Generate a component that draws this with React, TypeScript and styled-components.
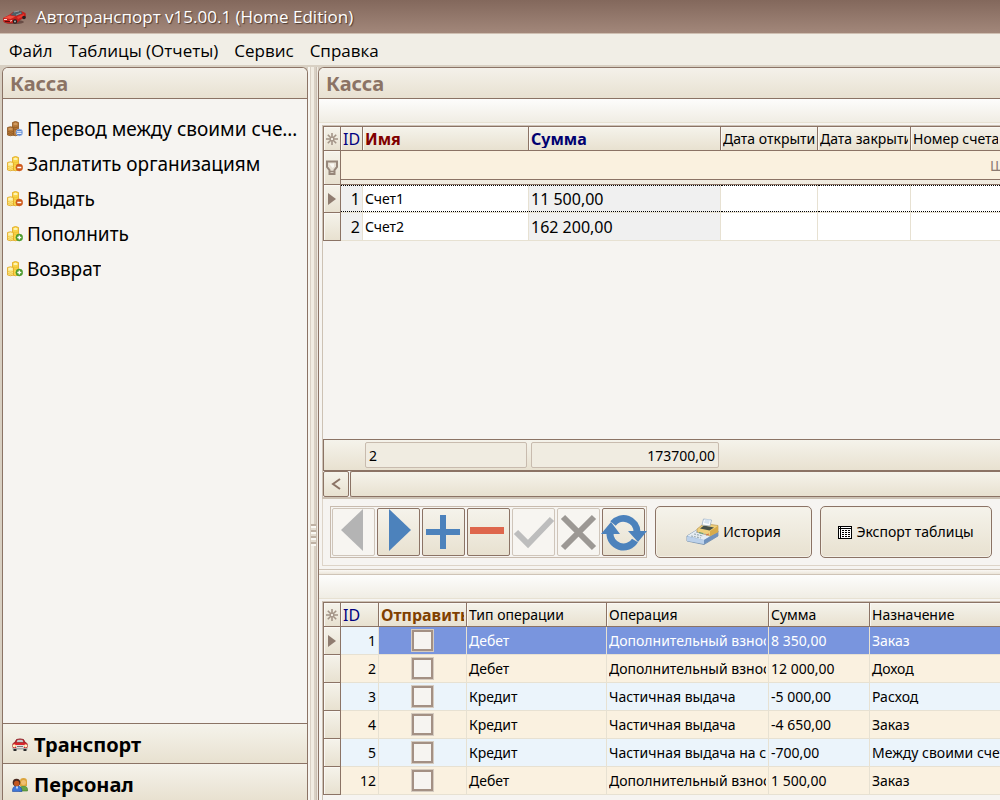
import React from 'react';
import styled, { createGlobalStyle, css } from 'styled-components';

const brown = '#8b7365';
const tan = '#cdc2b4';
const line = '#e7e1d2';
const face = 'linear-gradient(#f5f3eb, #e8e1d0)';

const GlobalStyle = createGlobalStyle`
  * { box-sizing: border-box; }
  html, body { margin: 0; }
  body { overflow: hidden; background: #f1eee6; color: #000; font: 14px/18px "Noto Sans", "DejaVu Sans", sans-serif; }
  button { font: inherit; color: inherit; cursor: pointer; }
`;

const Window = styled.div`
  min-height: 100vh;
  display: flex;
  flex-direction: column;
`;

const TitleBar = styled.header`
  height: 34px;
  display: flex;
  align-items: center;
  gap: 9px;
  padding: 0 2px;
  background: linear-gradient(#83685c, #a2877a);
  border-bottom: 1px solid #cfbfb2;
  color: #fff;
  font: 17px/22px "Open Sans", "Noto Sans", sans-serif;
  text-shadow: 1px 1px 1px #4b3830;
`;

const TitleText = styled.h1`
  margin: 0;
  font: inherit;
`;

const MenuBar = styled.nav`
  height: 33px;
  display: flex;
  align-items: center;
  gap: 16px;
  padding: 2px 9px 0;
  border-bottom: 2px solid #d8d0c3;
`;

const MenuItem = styled.button`
  border: 0;
  padding: 0;
  background: none;
  white-space: nowrap;
  font: 17px/22px "Open Sans", "Noto Sans", sans-serif;
`;

const Body = styled.div`
  flex: 1;
  display: flex;
  background: #d8cfc2;
  padding-left: 2px;
`;

const Sidebar = styled.aside`
  width: 306px;
  flex: none;
  display: flex;
  flex-direction: column;
  border: solid ${brown};
  border-width: 1px 1px 0;
  border-radius: 6px 6px 0 0;
  background: #f6f4f1;
  overflow: hidden;
`;

const PanelTitle = styled.h2`
  margin: 0;
  height: 31px;
  padding: 0 7px;
  background: linear-gradient(#f4f1ea, #e8e1d1);
  border-bottom: 1px solid ${brown};
  color: #8b7365;
  font-size: 20px;
  line-height: 32px;
  font-weight: 700;
`;

const ActionList = styled.ul`
  flex: 1;
  margin: 0;
  padding: 12px 4px;
  list-style: none;
`;

const Action = styled.button`
  width: 100%;
  height: 35px;
  display: flex;
  align-items: center;
  gap: 4px;
  padding: 0;
  border: 0;
  background: none;
  font-size: 19px;
  line-height: 26px;
  text-align: left;
  svg { flex: none; }
  span {
    min-width: 0;
    overflow: hidden;
    text-overflow: ellipsis;
    white-space: nowrap;
  }
`;

const GroupButton = styled.button`
  display: flex;
  align-items: center;
  gap: 6px;
  padding: 8px 9px 6px;
  border: 0;
  border-top: 1px solid ${brown};
  background: ${face};
  font-size: 20px;
  line-height: 25px;
  font-weight: 700;
  &:last-child { padding-bottom: 3px; }
`;

const SideSplitter = styled.div`
  width: 10px;
  flex: none;
  display: flex;
  align-items: center;
  justify-content: center;
  padding-top: 202px;
  background: linear-gradient(90deg, #f7f5f0 2px, #d9d0c4 2px 3px, #f1ece2 3px 6px, #d9d0c4 6px 8px, #cbc0b3 8px 9px, #efe9e0 9px);
`;

const Grip = styled.div`
  width: 5px;
  height: 22px;
  background: repeating-linear-gradient(#bfb1a3 0 2px, #faf8f3 2px 4px, #e4ddd1 4px 6px);
`;

const Main = styled.main`
  flex: 1;
  min-width: 0;
  display: flex;
  flex-direction: column;
  border: solid ${brown};
  border-width: 1px 0 0 1px;
  border-radius: 6px 0 0 0;
  background: #f6f4f1;
  overflow: hidden;
`;

const Strip = styled.div`
  height: 24px;
  flex: none;
  background: linear-gradient(#fdfdfc, #f0ede4);
  border-bottom: 1px solid ${line};
`;

const GridFrame = styled.section<{ $grow?: boolean }>`
  display: flex;
  flex-direction: column;
  margin: 2px 0 0 3px;
  border: solid ${tan};
  border-width: 1px 0 0 1px;
  ${p => (p.$grow ? css`flex: 1;` : css`padding-bottom: 5px;`)}
`;

const Table = styled.table`
  width: 100%;
  table-layout: fixed;
  border-collapse: separate;
  border-spacing: 0;
  border: solid ${brown};
  border-width: 1px 0 0 1px;
  th, td { padding: 0; text-align: left; overflow: hidden; white-space: nowrap; }
  th:last-child, td:last-child { border-right: 0; }
`;

const Head = styled.th<{ $color?: string; $big?: boolean; $bold?: boolean }>`
  height: 24px;
  border: solid ${brown};
  border-width: 0 1px 1px 0;
  background: ${face};
  box-shadow: inset 1px 1px #faf8f3;
  color: ${p => p.$color ?? '#000'};
  font-size: ${p => (p.$big ? 16 : 14)}px;
  font-weight: ${p => (p.$bold ? 700 : 400)};
`;

const Clip = styled.div`
  margin: 0 2px;
  overflow: hidden;
`;

const Marker = styled.td<{ $tall?: boolean }>`
  height: ${p => (p.$tall ? 34 : 28)}px;
  border: solid ${brown};
  border-width: 0 1px 1px 0;
  background: ${face};
  box-shadow: inset 1px 1px #faf8f3;
  svg { display: block; margin: 0 auto; }
`;

const FilterCell = styled.td`
  background: #faf1df;
  vertical-align: top;
`;

const FilterHint = styled.div`
  height: 29px;
  display: flex;
  justify-content: flex-end;
  border-bottom: 1px solid ${brown};
  color: #8b7b72;
  line-height: 30px;
  span { width: 10px; overflow: hidden; }
`;

const FilterBand = styled.div`
  height: 5px;
  background: #f0ebe0;
  border-bottom: 1px solid ${brown};
`;

const Cell = styled.td<{ $tone?: string; $big?: boolean }>`
  height: 28px;
  border: solid ${line};
  border-width: 0 1px 1px 0;
  background: ${p => p.$tone ?? '#fff'};
  font-size: ${p => (p.$big ? 16 : 14)}px;
`;

const Value = styled.div<{ $focus?: boolean; $right?: boolean }>`
  height: 27px;
  padding: 0 2px;
  line-height: ${p => (p.$focus ? 26 : 28)}px;
  text-align: ${p => (p.$right ? 'right' : 'left')};
  ${p => p.$focus && css`border: dotted #000; border-width: 1px 0;`}
`;

const Row = styled.tr<{ $selected?: boolean; $even?: boolean }>`
  ${Cell} { background: ${p => (p.$even ? '#faf1e0' : '#ebf4fb')}; }
  ${p => p.$selected && css`
    ${Cell}:nth-child(n + 3) { background: #7995de; color: #fff; }
  `}
`;

const Check = styled.input`
  appearance: none;
  display: block;
  width: 23px;
  height: 23px;
  margin: 0 auto;
  border: 3px solid #a39084;
  outline: 1px solid #d5cbc0;
  outline-offset: -1px;
  background: #f6f4f1;
`;

const Empty = styled.div`
  flex: 1;
`;

const Footer = styled.div`
  height: 32px;
  display: flex;
  gap: 4px;
  padding: 2px 0 2px 41px;
  border: solid ${brown};
  border-width: 1px 0 1px 1px;
  background: ${face};
`;

const Total = styled.output<{ $wide?: boolean }>`
  width: ${p => (p.$wide ? 188 : 162)}px;
  height: 26px;
  padding: 0 3px;
  border: 1px solid #c8bbae;
  border-radius: 2px;
  background: #f0ece1;
  line-height: 25px;
  text-align: ${p => (p.$wide ? 'right' : 'left')};
`;

const ScrollBar = styled.div`
  height: 28px;
  display: flex;
  gap: 1px;
  border-bottom: 2px solid ${tan};
`;

const ScrollArrow = styled.button`
  width: 26px;
  display: grid;
  place-items: center;
  padding: 0;
  border: 1px solid ${brown};
  border-radius: 2px;
  background: ${face};
`;

const ScrollThumb = styled.div`
  flex: 1;
  border: solid ${brown};
  border-width: 1px 0 1px 1px;
  border-radius: 2px 0 0 2px;
  background: ${face};
`;

const ToolPanel = styled.section`
  height: 67px;
  flex: none;
  display: flex;
  align-items: flex-start;
  gap: 8px;
  margin: 0 0 3px 3px;
  padding: 7px;
  border: solid #ddd4c8;
  border-width: 0 0 1px 1px;
`;

const Navigator = styled.div`
  display: flex;
  gap: 2px;
  height: 52px;
  padding: 1px;
  border: 1px solid #c8bbae;
`;

const NavButton = styled.button`
  width: 43px;
  height: 48px;
  padding: 0;
  border: 1px solid ${brown};
  border-radius: 2px;
  background: ${face};
  &:disabled { border-color: #cfc5ba; background: #f7f5f1; cursor: default; }
  svg { display: block; width: 100%; height: 100%; overflow: visible; }
`;

const CommandButton = styled.button<{ $wide?: boolean }>`
  width: ${p => (p.$wide ? 172 : 157)}px;
  height: 52px;
  flex: none;
  display: flex;
  align-items: center;
  justify-content: center;
  gap: 4px;
  padding: 0;
  border: 1px solid ${brown};
  border-radius: 5px;
  background: ${face};
  box-shadow: inset 0 0 0 1px #f4f0e6;
`;

const Divider = styled.div`
  height: 6px;
  flex: none;
  border: solid #cfc4b7;
  border-width: 1px 0;
  background: linear-gradient(#faf8f4, #ece6da);
`;

const CarIcon = () => (
  <svg width="25" height="16" viewBox="0 0 25 16">
    <ellipse cx="12" cy="13" rx="10" ry="2" fill="#4a2c28" opacity=".6" />
    <path d="M1 9 7 6l4-3 8-1 4.500 2 .5 4-5 2.500-4 3.500-9 .5-4.500-1.500z" fill="#c4201c" />
    <path d="m8.500 6 3.500-3.500 7-.5 1.500 2.500L14 7z" fill="#4f5f66" />
    <path d="m12 3 5-1M14 6l5-2" stroke="#a9b8bd" strokeWidth=".7" />
    <path d="m1.500 9 6-2.500 6 1-5 2.500z" fill="#f0503f" />
    <path d="m15 8 7-3v2l-6 3z" fill="#e83a30" />
    <circle cx="13" cy="12.500" r="2.200" fill="#25201f" /><circle cx="13" cy="12.500" r=".9" fill="#bbb" />
    <circle cx="22" cy="8.500" r="1.800" fill="#25201f" />
    <path d="M2 10.500h3M7 12.500l3-1" stroke="#ffd9d0" />
    <path d="M3 12.500h5" stroke="#5e0c0c" />
  </svg>
);

const CoinsIcon = ({ kind }: { kind: 'move' | 'minus' | 'plus' }) => {
  const move = kind === 'move';
  const edge = move ? '#8a5420' : '#dfa41c';
  const light = move ? '#d09a60' : '#fdf3b8';
  const gold = move ? '#b87a3a' : '#f9d548';
  const badge = move ? '#5b86d0' : kind === 'minus' ? '#cf5a1c' : '#4b9a2e';
  return (
    <svg width="16" height="16" viewBox="0 0 16 16">
      <path d="M5.500 1.500Q8.500-.5 11.500 1.500v12.500q-3 1.500-6 0z" fill={gold} stroke={edge} strokeWidth=".8" />
      <path d="M6.500 2.500q2-1.500 4 0v1q-2 1-4 0z" fill={light} />
      <path d="M.5 6.500Q3.500 5 6.500 6.500V14q-3 1.500-6 0z" fill={move ? gold : '#fbe88a'} stroke={edge} strokeWidth=".8" />
      <path d="M1.500 7.500q2-1.500 4 0v1q-2 1-4 0z" fill={light} />
      <path d="M1 10.500q2.500 1.500 5 0M1 12.500q2.500 1.500 5 0M6.500 6q2 1 4.500 0M7 8q2 1 4 0" stroke={move ? edge : '#eebf35'} fill="none" strokeWidth=".8" />
      <circle cx="12.300" cy="11.500" r="3.400" fill={badge} stroke={move ? '#b9cdf0' : badge} strokeWidth=".6" />
      {kind === 'move' && <path d="M10 10.800h4.500M10 12.400h4.500" stroke="#fff" />}
      {kind === 'minus' && <path d="M10.300 11.500h4" stroke="#fff" strokeWidth="1.500" />}
      {kind === 'plus' && <path d="M10.300 11.500h4M12.300 9.500v4" stroke="#fff" strokeWidth="1.400" />}
    </svg>
  );
};

const TransportIcon = () => (
  <svg width="16" height="16" viewBox="0 0 16 16">
    <path d="m2.500 6 2-3.500q3.500-1.200 7 0l2 3.500z" fill="#c8202a" stroke="#7e1820" strokeWidth=".8" />
    <path d="m4.500 5.500 1-2.500q2.500-.6 5 0l1 2.500z" fill="#c3ccd0" />
    <rect x=".5" y="5.500" width="15" height="6" rx="2.500" fill="#d9262c" stroke="#8a3030" strokeWidth=".5" />
    <path d="M3.500 8h9l-1 3.500h-7z" fill="#e4dfdc" />
    <path d="M5 9.500h6" stroke="#777" />
    <circle cx="2.300" cy="8.800" r="1.600" fill="#fff2c0" /><circle cx="13.700" cy="8.800" r="1.600" fill="#fff2c0" />
    <path d="M.5 11h15v1.500H.5z" fill="#a9a9a9" /><path d="M1.500 12h3v2h-3zM11.500 12h3v2h-3z" fill="#2a2a2a" />
  </svg>
);

const PeopleIcon = () => (
  <svg width="16" height="16" viewBox="0 0 16 16">
    <path d="M7 14q0-5 4.500-5t4 5z" fill="#6aa544" stroke="#3d7a28" strokeWidth=".6" />
    <path d="M8 9V4q0-3 3.500-3T15 4v5z" fill="#dca43c" /><circle cx="11.500" cy="5.500" r="2.500" fill="#f0bf70" />
    <path d="M.5 14.500q-.5-5.500 4.500-5.500t5 5.500z" fill="#3f76d8" stroke="#1e4aa0" strokeWidth=".6" />
    <circle cx="4.500" cy="5.500" r="3.800" fill="#49291f" /><circle cx="4.700" cy="6.500" r="2.700" fill="#c4571f" />
    <path d="m4 9.500 1 3 1-3z" fill="#fff" />
  </svg>
);

const StarIcon = styled(({ className }: { className?: string }) => (
  <svg className={className} width="12" height="12" viewBox="0 0 12 12">
    <path d="M6 0v12M0 6h12M1.800 1.800l8.400 8.400M10.200 1.800l-8.400 8.400" stroke="#a39487" strokeWidth="1.600" />
    <circle cx="6" cy="6" r="1.800" fill="#f1ede3" stroke="#a39487" strokeWidth="1.200" />
  </svg>
))`
  display: block;
  margin: 0 auto;
`;

const FilterIcon = () => (
  <svg width="12" height="16" viewBox="0 0 12 16">
    <path d="M1 1.500h10v5.500L8.500 10v4h-5v-4L1 7z" fill="#e7e0d4" stroke="#97877b" strokeWidth="2" />
    <path d="M3 3.500h5v3L6.500 8z" fill="#faf8f3" /><path d="M3 11.500h6M3.500 14h5" stroke="#97877b" strokeWidth="1.500" />
  </svg>
);

const PointerIcon = () => (
  <svg width="8" height="12" viewBox="0 0 8 12"><path d="M0 0v12l8-6z" fill="#8f7c70" /></svg>
);

const RegisterIcon = () => (
  <svg width="33" height="28" viewBox="0 0 33 28">
    <path d="m1 18 13-8 18 3v5L18 26.500 1 23z" fill="#8fb0d6" stroke="#64809f" strokeWidth=".7" />
    <path d="m1 18 13-8 17 4-13 8z" fill="#e6edf3" />
    <path d="m1 18.500 17 3.500v4L1 23z" fill="#bcd1ea" /><path d="m18 22 14-8v4L18 26z" fill="#6f91bc" />
    <path d="m11 11 7-5.500 14 2V14l-8 4-13-4z" fill="#efd07c" stroke="#b08c48" strokeWidth=".6" />
    <path d="m24 13 8-5v6l-8 4z" fill="#d7ab4a" />
    <path d="m14 10.500 4-3 10 2-4.500 3z" fill="#46524c" />
    <path d="m16 7 1.500-6 8 1-1.500 6z" fill="#fff" stroke="#8ea6c0" strokeWidth=".7" />
    <path d="m18 5 1-3.500h5L23 6z" fill="#d5e4f2" />
    <path d="m10 14 10 2.500M8 16l9 2M5 18l10 2" stroke="#9dadb4" strokeWidth="1.200" strokeDasharray="2 1" />
    <path d="m13 14.500 4 1" stroke="#64a070" /><path d="m20 17 3-1" stroke="#d4724a" strokeWidth="1.200" />
  </svg>
);

const SheetIcon = () => (
  <svg width="14" height="13" viewBox="0 0 14 13" shapeRendering="crispEdges">
    <path d="M0 0h14v13H0z" /><path d="M1 1h1v1H1zM3 1h10v1H3zM1 3h1v9H1zM3 3h10v9H3z" fill="#fff" />
    <path d="M4 4h2v1H4zM7 4h2v1H7zM10 4h2v1h-2zM4 6h2v1H4zM7 6h2v1H7zM10 6h2v1h-2zM4 8h2v1H4zM7 8h2v1H7zM10 8h2v1h-2zM4 10h2v1H4zM7 10h2v1H7zM10 10h2v1h-2z" />
  </svg>
);

const navButtons = [
  { label: 'Предыдущая запись', off: true, art: <path d="M30 0v42L8 21z" fill="#b4b4b4" /> },
  { label: 'Следующая запись', art: <path d="M11 0v42l22-21z" fill="#4c82bc" /> },
  { label: 'Добавить', art: <path d="M17 6h6v14h14v6H23v14h-6V26H3v-6h14z" fill="#4c82bc" /> },
  { label: 'Удалить', art: <path d="M2 18h34v7H2z" fill="#de664c" /> },
  { label: 'Сохранить', off: true, art: <path d="m3 23 12 12L39 10" fill="none" stroke="#bdbdbd" strokeWidth="6" /> },
  { label: 'Отменить', off: true, art: <path d="m5 8 31 31M36 8 5 39" fill="none" stroke="#9c9894" strokeWidth="6" /> },
  {
    label: 'Обновить',
    art: (
      <g fill="none" stroke="#4c82bc" strokeWidth="7">
        <path d="M10 14.500A13.500 13.500 0 0 1 34 23M32 31.500A13.500 13.500 0 0 1 7 23.500" />
        <path d="M25 22h19l-9 11zM-2 25h19L8 13z" fill="#4c82bc" stroke="none" />
      </g>
    ),
  },
];

const actions: { text: string; kind: 'move' | 'minus' | 'plus' }[] = [
  { text: 'Перевод между своими счетами', kind: 'move' },
  { text: 'Заплатить организациям', kind: 'minus' },
  { text: 'Выдать', kind: 'minus' },
  { text: 'Пополнить', kind: 'plus' },
  { text: 'Возврат', kind: 'plus' },
];

const accounts = [
  { id: 1, name: 'Счет1', sum: '11 500,00' },
  { id: 2, name: 'Счет2', sum: '162 200,00' },
];

const operations = [
  [1, 'Дебет', 'Дополнительный взнос', '8 350,00', 'Заказ'],
  [2, 'Дебет', 'Дополнительный взнос', '12 000,00', 'Доход'],
  [3, 'Кредит', 'Частичная выдача', '-5 000,00', 'Расход'],
  [4, 'Кредит', 'Частичная выдача', '-4 650,00', 'Заказ'],
  [5, 'Кредит', 'Частичная выдача на счет', '-700,00', 'Между своими счетами'],
  [12, 'Дебет', 'Дополнительный взнос', '1 500,00', 'Заказ'],
];

const Columns = ({ widths }: { widths: number[] }) => (
  <colgroup>
    {widths.map((w, i) => <col key={i} width={w} />)}
    <col />
  </colgroup>
);

export default function App() {
  return (
    <Window>
      <GlobalStyle />
      <TitleBar>
        <CarIcon />
        <TitleText>Автотранспорт v15.00.1 (Home Edition)</TitleText>
      </TitleBar>
      <MenuBar>
        {['Файл', 'Таблицы (Отчеты)', 'Сервис', 'Справка'].map(m => <MenuItem key={m}>{m}</MenuItem>)}
      </MenuBar>
      <Body>
        <Sidebar>
          <PanelTitle>Касса</PanelTitle>
          <ActionList>
            {actions.map(a => (
              <li key={a.text}>
                <Action><CoinsIcon kind={a.kind} /><span>{a.text}</span></Action>
              </li>
            ))}
          </ActionList>
          <GroupButton><TransportIcon />Транспорт</GroupButton>
          <GroupButton><PeopleIcon />Персонал</GroupButton>
        </Sidebar>
        <SideSplitter><Grip /></SideSplitter>
        <Main>
          <PanelTitle>Касса</PanelTitle>
          <Strip />
          <GridFrame $grow>
            <Table>
              <Columns widths={[17, 22, 166, 192, 97, 93]} />
              <thead>
                <tr>
                  <Head><StarIcon /></Head>
                  <Head $big $color="#000080"><Clip>ID</Clip></Head>
                  <Head $big $bold $color="#800000"><Clip>Имя</Clip></Head>
                  <Head $big $bold $color="#000070"><Clip>Сумма</Clip></Head>
                  <Head><Clip>Дата открытия</Clip></Head>
                  <Head><Clip>Дата закрытия</Clip></Head>
                  <Head><Clip>Номер счета</Clip></Head>
                </tr>
              </thead>
              <tbody>
                <tr>
                  <Marker $tall><FilterIcon /></Marker>
                  <FilterCell colSpan={6}>
                    <FilterHint><span>Щ</span></FilterHint>
                    <FilterBand />
                  </FilterCell>
                </tr>
                {accounts.map((a, i) => (
                  <tr key={a.id}>
                    <Marker>{i === 0 && <PointerIcon />}</Marker>
                    <Cell $big $tone="#f0f0f0"><Value $focus={i === 0} $right>{a.id}</Value></Cell>
                    <Cell><Value $focus={i === 0}>{a.name}</Value></Cell>
                    <Cell $big $tone="#f0f0f0"><Value $focus={i === 0}>{a.sum}</Value></Cell>
                    <Cell><Value $focus={i === 0} /></Cell>
                    <Cell><Value $focus={i === 0} /></Cell>
                    <Cell><Value $focus={i === 0} /></Cell>
                  </tr>
                ))}
              </tbody>
            </Table>
            <Empty />
            <Footer>
              <Total>2</Total>
              <Total $wide>173700,00</Total>
            </Footer>
            <ScrollBar>
              <ScrollArrow aria-label="Прокрутить влево">
                <svg width="10" height="12" viewBox="0 0 10 12"><path d="M9 1 2 6l7 5" fill="none" stroke={brown} strokeWidth="2" /></svg>
              </ScrollArrow>
              <ScrollThumb />
            </ScrollBar>
          </GridFrame>
          <ToolPanel>
            <Navigator>
              {navButtons.map(b => (
                <NavButton key={b.label} aria-label={b.label} disabled={b.off}>
                  <svg viewBox="0 0 41 46">{b.art}</svg>
                </NavButton>
              ))}
            </Navigator>
            <CommandButton><RegisterIcon />История</CommandButton>
            <CommandButton $wide><SheetIcon />Экспорт таблицы</CommandButton>
          </ToolPanel>
          <Divider />
          <Strip />
          <GridFrame>
            <Table>
              <Columns widths={[17, 38, 88, 140, 162, 101]} />
              <thead>
                <tr>
                  <Head><StarIcon /></Head>
                  <Head $big $color="#000080"><Clip>ID</Clip></Head>
                  <Head $big $bold $color="#804000"><Clip>Отправить</Clip></Head>
                  <Head><Clip>Тип операции</Clip></Head>
                  <Head><Clip>Операция</Clip></Head>
                  <Head><Clip>Сумма</Clip></Head>
                  <Head><Clip>Назначение</Clip></Head>
                </tr>
              </thead>
              <tbody>
                {operations.map(([id, type, name, sum, purpose], i) => (
                  <Row key={id} $selected={i === 0} $even={i % 2 === 1}>
                    <Marker>{i === 0 && <PointerIcon />}</Marker>
                    <Cell><Value $right>{id}</Value></Cell>
                    <Cell><Check type="checkbox" aria-label={`Отправить ${id}`} /></Cell>
                    <Cell><Value>{type}</Value></Cell>
                    <Cell><Clip>{name}</Clip></Cell>
                    <Cell><Value>{sum}</Value></Cell>
                    <Cell><Value>{purpose}</Value></Cell>
                  </Row>
                ))}
              </tbody>
            </Table>
          </GridFrame>
        </Main>
      </Body>
    </Window>
  );
}
